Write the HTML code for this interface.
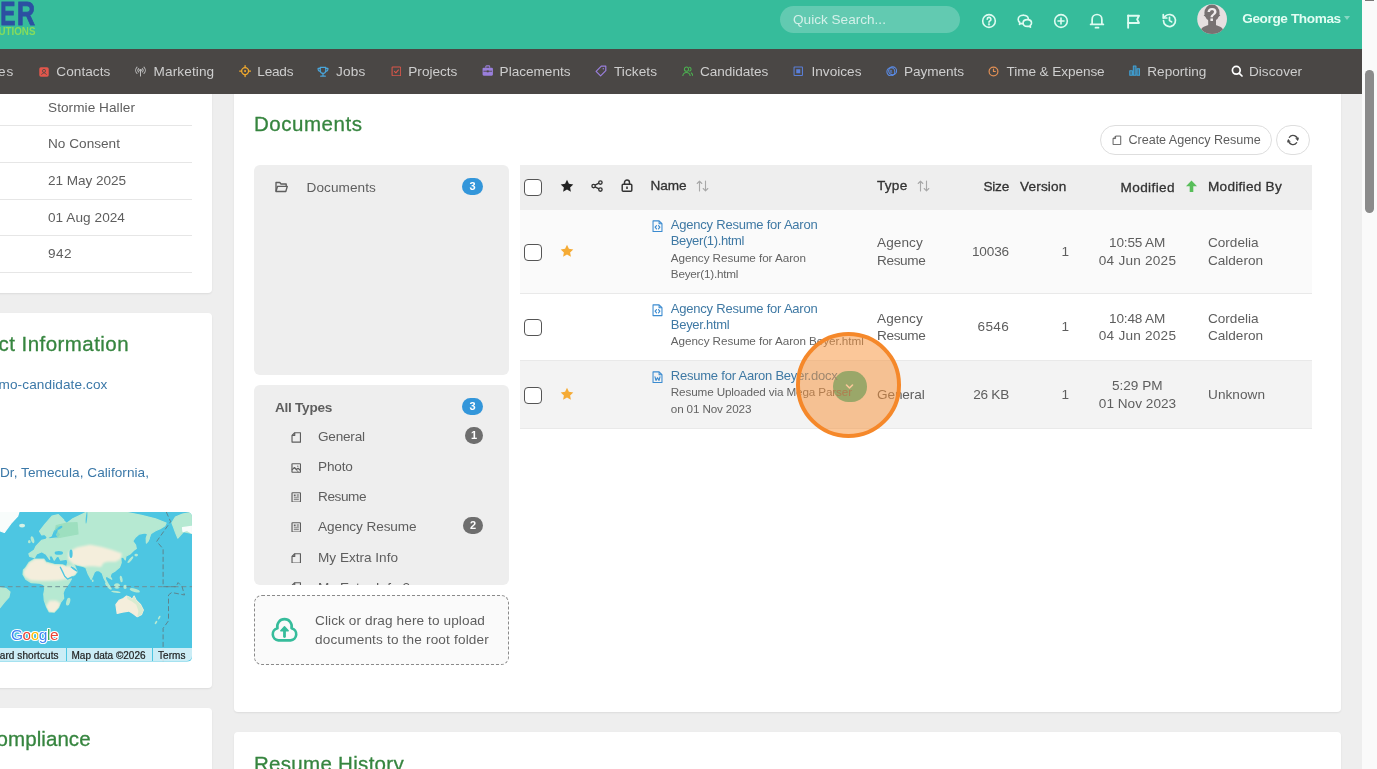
<!DOCTYPE html>
<html lang="en">
<head>
<meta charset="utf-8">
<title>Candidate Documents</title>
<style>
*{box-sizing:border-box;margin:0;padding:0}
html,body{width:1377px;height:769px;overflow:hidden;background:#eeeeee;font-family:"Liberation Sans",sans-serif;color:#555;}
.abs{position:absolute;white-space:nowrap}
#hdr{z-index:5;position:absolute;left:0;top:0;width:1362px;height:49px;background:#36bc9b}
#nav{position:absolute;left:0;top:49px;width:1362px;height:44.5px;background:#4a4745;z-index:5}
#nav .it{position:absolute;top:0;height:45px;line-height:45px;font-size:14px;color:#d6d6d6;white-space:nowrap}
#nav svg{position:absolute}
#sb{z-index:6;position:absolute;left:1362px;top:0;width:15px;height:769px;background:#fafafa}
#sb .th{position:absolute;left:3.200px;top:70px;width:8.800px;height:143px;border-radius:4.400px;background:#8b8b8b}
.card{position:absolute;background:#fff;border-radius:4px;box-shadow:0 1px 2px rgba(0,0,0,.08)}
.h1{position:absolute;color:#388e3c;font-size:20px;white-space:nowrap}
.lrow{position:absolute;left:0;width:192px;height:1px;background:#e6e6e6}
.ltxt{position:absolute;left:48px;font-size:14px;color:#555;white-space:nowrap}
.lnk{position:absolute;font-size:13.5px;color:#3b78a8;white-space:nowrap}
.panel{position:absolute;background:#eeeeee;border-radius:6px}
.badge{position:absolute;height:16px;border-radius:8px;color:#fff;font-size:11px;font-weight:bold;text-align:center;line-height:16px}
.t{position:absolute;white-space:nowrap;line-height:20px;height:20px}
.cb{position:absolute;width:17.600px;height:17px;border:1.5px solid #555;border-radius:4px;background:#fff}
</style>
</head>
<body>
<div id="root" style="position:absolute;left:0;top:0;width:1377px;height:769px;overflow:hidden;will-change:transform">
<!-- left cards -->
<div class="card" style="left:-10px;top:80px;width:222px;height:213px"></div>
<div class="lrow" style="top:125px"></div>
<div class="lrow" style="top:162px"></div>
<div class="lrow" style="top:198.500px"></div>
<div class="lrow" style="top:235px"></div>
<div class="lrow" style="top:271.500px"></div>
<span class="t" style="left:48px;top:97.8px;font-size:13.6px;color:#5e5e5e;letter-spacing:0.062px">Stormie Haller</span>
<span class="t" style="left:48px;top:134.3px;font-size:13.6px;color:#5e5e5e;letter-spacing:0.020px">No Consent</span>
<span class="t" style="left:48px;top:170.8px;font-size:13.6px;color:#5e5e5e;letter-spacing:-0.055px">21 May 2025</span>
<span class="t" style="left:48px;top:207.8px;font-size:13.6px;color:#5e5e5e;letter-spacing:0.058px">01 Aug 2024</span>
<span class="t" style="left:48px;top:244.3px;font-size:13.6px;color:#5e5e5e;letter-spacing:0.438px">942</span>

<div class="card" style="left:-10px;top:313px;width:222px;height:375px"></div>
<span class="t" style="left:-1.5px;top:333.6px;font-size:20.5px;color:#36853f;letter-spacing:0.450px;-webkit-text-stroke:.3px #36853f">ct Information</span>
<span class="t" style="left:-1.5px;top:375.3px;font-size:13.6px;color:#3b78a8;letter-spacing:0.106px">mo-candidate.cox</span>
<span class="t" style="left:0px;top:463.3px;font-size:13.6px;color:#3b78a8;letter-spacing:0.046px">Dr, Temecula, California,</span>

<!-- map -->
<svg class="abs" style="left:0;top:512px;border-radius:0 5px 5px 0" width="192" height="149.500" viewBox="0 0 192 149.500">
<rect width="192" height="149.500" fill="#4dc6e2"/>
<g stroke-linejoin="round" stroke-width="1.200">
<path d="M29.7 44.3L28.9 41.7L34.3 38.1L35.9 34.4L41.6 28.4L45.8 27.3L47.3 25.3L49.4 26.9L58.3 25.9L60.9 22.5L58.3 19.3L60.9 13.6L63.5 8.4L66.6 11.5L72.8 6.8L82.2 2.2L86.4 0.1L126.3 0.3L141.5 3.3L155.5 6.8L166.1 11.1L164.9 13.8L160.2 16.7L155.5 18.8L151.1 21.4L149.9 23.5L148.3 28.7L146.4 31.0L146.2 26.1L147.6 22.0L145.0 20.9L139.2 22.1L135.1 25.6L132.7 29.1L135.6 33.1L136.3 36.6L133.5 38.5L130.0 42.0L125.9 44.3L125.3 47.9L123.1 45.0L120.9 46.0L121.2 50.7L119.5 55.3L115.3 58.9L111.3 61.2L110.1 64.2L111.8 67.3L108.7 65.4L105.9 63.8L105.4 67.0L107.6 71.1L109.0 74.1L106.4 70.6L103.8 65.9L102.3 61.2L99.4 58.9L97.0 58.3L94.4 59.9L91.2 67.4L88.0 61.6L85.8 55.6L82.6 54.3L77.3 53.2L74.0 52.1L77.2 59.6L75.1 62.7L67.1 66.9L64.7 63.8L60.4 54.9L66.6 54.4L67.8 50.2L66.8 47.1L60.6 48.2L58.5 44.0L56.4 45.0L54.3 48.2L52.2 44.0L48.9 43.8L49.7 47.4L46.0 42.1L41.8 39.8L36.6 41.9L34.5 45.6ZM25.2 56.3L29.3 50.2L34.5 47.1L43.9 47.1L46.0 50.2L54.3 52.3L62.6 52.8L66.6 54.6L60.1 55.1L64.5 64.0L67.1 67.1L64.5 63.2L66.6 66.3L71.4 66.9L68.7 71.7L64.7 76.9L63.1 81.1L63.7 86.3L60.6 90.5L58.5 95.7L54.3 100.2L49.1 99.8L46.4 94.6L44.3 88.4L43.8 82.1L44.8 76.9L43.8 72.8L39.6 71.2L31.3 70.7L26.1 67.6L23.0 62.4L23.4 58.0ZM0.0 75.7L6.2 76.7L10.0 79.9L8.9 85.1L4.2 90.3L0.0 95.7ZM171.9 10.9L175.4 5.0L182.5 2.1L191.8 0.3L191.8 21.4L183.6 19.7L177.8 26.1L175.4 20.2L173.7 15.6ZM39.5 19.3L44.7 12.6L52.0 4.2L58.3 2.7L63.7 7.9L60.9 13.6L56.7 13.6L53.3 18.8L51.2 24.0L47.6 25.6L45.0 22.5L41.8 23.0Z" fill="#b6e9d2" stroke="#b6e9d2"/>
<path d="M56.2 13.6L66.6 11.0L77.0 10.5L78.0 21.9L58.3 25.6L55.2 20.4Z" fill="#98ddbb" stroke="#98ddbb" opacity=".8"/>
<filter id="mb" x="-5%" y="-5%" width="110%" height="110%"><feGaussianBlur stdDeviation=".8"/></filter><clipPath id="lc"><path d="M29.7 44.3L28.9 41.7L34.3 38.1L35.9 34.4L41.6 28.4L45.8 27.3L47.3 25.3L49.4 26.9L58.3 25.9L60.9 22.5L58.3 19.3L60.9 13.6L63.5 8.4L66.6 11.5L72.8 6.8L82.2 2.2L86.4 0.1L126.3 0.3L141.5 3.3L155.5 6.8L166.1 11.1L164.9 13.8L160.2 16.7L155.5 18.8L151.1 21.4L149.9 23.5L148.3 28.7L146.4 31.0L146.2 26.1L147.6 22.0L145.0 20.9L139.2 22.1L135.1 25.6L132.7 29.1L135.6 33.1L136.3 36.6L133.5 38.5L130.0 42.0L125.9 44.3L125.3 47.9L123.1 45.0L120.9 46.0L121.2 50.7L119.5 55.3L115.3 58.9L111.3 61.2L110.1 64.2L111.8 67.3L108.7 65.4L105.9 63.8L105.4 67.0L107.6 71.1L109.0 74.1L106.4 70.6L103.8 65.9L102.3 61.2L99.4 58.9L97.0 58.3L94.4 59.9L91.2 67.4L88.0 61.6L85.8 55.6L82.6 54.3L77.3 53.2L74.0 52.1L77.2 59.6L75.1 62.7L67.1 66.9L64.7 63.8L60.4 54.9L66.6 54.4L67.8 50.2L66.8 47.1L60.6 48.2L58.5 44.0L56.4 45.0L54.3 48.2L52.2 44.0L48.9 43.8L49.7 47.4L46.0 42.1L41.8 39.8L36.6 41.9L34.5 45.6ZM25.2 56.3L29.3 50.2L34.5 47.1L43.9 47.1L46.0 50.2L54.3 52.3L62.6 52.8L66.6 54.6L60.1 55.1L64.5 64.0L67.1 67.1L64.5 63.2L66.6 66.3L71.4 66.9L68.7 71.7L64.7 76.9L63.1 81.1L63.7 86.3L60.6 90.5L58.5 95.7L54.3 100.2L49.1 99.8L46.4 94.6L44.3 88.4L43.8 82.1L44.8 76.9L43.8 72.8L39.6 71.2L31.3 70.7L26.1 67.6L23.0 62.4L23.4 58.0Z"/></clipPath><g clip-path="url(#lc)"><path d="M26.0 56.8L29.7 50.9L34.9 47.7L43.7 47.7L45.8 50.9L54.3 52.8L62.4 53.4L66.6 55.0L66.6 60.1L68.7 65.8L58.3 67.9L43.7 68.4L31.2 67.9L25.0 64.2L23.7 60.1ZM60.8 55.2L66.6 54.8L71.8 54.8L77.2 59.8L75.1 62.7L67.2 66.7L64.7 63.6ZM69.1 40.6L77.3 35.8L90.1 33.3L100.9 35.4L111.6 38.4L121.2 41.8L120.2 46.6L115.9 49.1L107.3 49.1L103.0 50.4L100.9 54.3L90.1 53.4L82.6 54.3L74.0 52.1L68.7 47.0ZM46.4 94.6L49.9 89.2L56.2 89.2L59.8 91.8L58.5 95.7L54.3 100.2L49.1 99.8Z" fill="#f4eedc" stroke="#f4eedc" filter="url(#mb)"/></g><path d="M115.9 92.7L119.1 88.4L123.4 86.5L126.6 84.1L129.8 85.2L132.0 87.6L134.1 84.1L136.3 88.4L140.6 92.7L143.3 98.1L141.6 102.4L137.3 104.7L133.0 101.5L128.8 99.1L122.3 100.2L117.2 101.5Z" fill="#f4eedc" stroke="#f4eedc"/>
<path d="M126.6 84.1L129.8 85.2L132.0 87.6L134.1 84.1L136.3 88.4L140.6 92.7L143.3 98.1L141.6 102.4L137.3 104.7L138.4 99.1L136.3 92.7L132.0 89.5L127.7 87.3Z" fill="#cdeacb" opacity=".7"/>
<path d="M0.0 0.1L18.9 0.1L17.7 4.2L11.7 10.5L4.4 20.5L0.0 18.8ZM182.5 15.6L191.8 14.4L191.8 21.2L187.1 18.5L183.0 19.7Z" fill="#f8fcfb" stroke="#f8fcfb"/>
</g>
<ellipse cx="68.2" cy="89.7" rx="1.9" ry="4.0" fill="#b6e9d2" transform="rotate(15 68.2 89.7)"/><ellipse cx="32.5" cy="27.7" rx="1.6" ry="3.6" fill="#b6e9d2" transform="rotate(-15 32.5 27.7)"/><ellipse cx="29.3" cy="29.7" rx="1.3" ry="1.6" fill="#b6e9d2"/><ellipse cx="22.1" cy="13.6" rx="2.9" ry="1.9" fill="#d6f2e6"/><ellipse cx="130.4" cy="47.7" rx="1.2" ry="4.2" fill="#b6e9d2" transform="rotate(40 130.4 47.7)"/><ellipse cx="136.2" cy="43.1" rx="1.8" ry="1.4" fill="#b6e9d2"/><ellipse cx="121.2" cy="67.0" rx="1.3" ry="3.4" fill="#b6e9d2" transform="rotate(-10 121.2 67.0)"/><ellipse cx="108.4" cy="74.0" rx="1.5" ry="4.7" fill="#b6e9d2" transform="rotate(-40 108.4 74.0)"/><ellipse cx="117.0" cy="74.0" rx="3.0" ry="2.8" fill="#b6e9d2"/><ellipse cx="115.9" cy="79.8" rx="4.7" ry="0.9" fill="#b6e9d2" transform="rotate(8 115.9 79.8)"/><ellipse cx="134.8" cy="78.3" rx="5.2" ry="1.7" fill="#b6e9d2" transform="rotate(15 134.8 78.3)"/><ellipse cx="92.7" cy="68.7" rx="0.9" ry="1.3" fill="#b6e9d2"/><ellipse cx="159.2" cy="105.6" rx="0.9" ry="2.1" fill="#b6e9d2" transform="rotate(30 159.2 105.6)"/><ellipse cx="156.0" cy="110.5" rx="0.9" ry="1.9" fill="#b6e9d2" transform="rotate(35 156.0 110.5)"/><ellipse cx="125.1" cy="74.9" rx="1.7" ry="2.1" fill="#b6e9d2"/><ellipse cx="148.5" cy="26.1" rx="1.3" ry="4.6" fill="#b6e9d2" transform="rotate(20 148.5 26.1)"/>
<ellipse cx="58.8" cy="40.9" rx="4.2" ry="1.9" fill="#4dc6e2"/><ellipse cx="71.0" cy="41.7" rx="1.6" ry="4.2" fill="#4dc6e2"/><ellipse cx="55.7" cy="20.4" rx="1.2" ry="3.6" fill="#4dc6e2" transform="rotate(25 55.7 20.4)"/><ellipse cx="59.8" cy="15.7" rx="3.0" ry="1.2" fill="#4dc6e2" transform="rotate(-30 59.8 15.7)"/><ellipse cx="86.5" cy="5.8" rx="0.7" ry="6.0" fill="#4dc6e2" transform="rotate(5 86.5 5.8)"/><ellipse cx="74.1" cy="57.1" rx="3.2" ry="0.8" fill="#4dc6e2" transform="rotate(35 74.1 57.1)"/>
<path d="M60.1 54.7L62.4 59.4L64.7 64.2L67.6 67.1L72.8 64.6M70.8 54.7L73.4 56.3L77.5 59.6" stroke="#4dc6e2" stroke-width="1.300" fill="none" stroke-linejoin="round"/>
<path d="M0 74.700H192" stroke="#6f8f96" stroke-width="1" stroke-dasharray="4.700 3.200" fill="none"/>
<path d="M166.3 0.0L170.6 9.7L156.7 29.4L163.1 36.9L163.1 74.7L176.0 74.7L178.1 70.6L182.0 74.5L184.5 83.0L171.7 80.5L168.5 83.0L168.5 108.8L163.1 116.3L163.1 149.1" stroke="#5f7d85" stroke-width=".9" stroke-dasharray="5 2.500" fill="none"/>
</svg>
<div class="abs" style="left:0;top:648.300px;width:65.500px;height:13.200px;background:rgba(245,250,252,.75)"></div>
<div class="abs" style="left:66.500px;top:648.300px;width:85.500px;height:13.200px;background:rgba(245,250,252,.75)"></div>
<div class="abs" style="left:153px;top:648.300px;width:39px;height:13.200px;background:rgba(245,250,252,.75);border-radius:0 0 5px 0"></div>
<span class="t" style="left:-29px;top:645.8px;font-size:10px;color:#222;letter-spacing:0.079px;-webkit-text-stroke:.2px #222">Keyboard shortcuts</span>
<span class="t" style="left:71.5px;top:645.8px;font-size:10px;color:#222;letter-spacing:-0.007px;-webkit-text-stroke:.2px #222">Map data ©2026</span>
<span class="t" style="left:158px;top:645.8px;font-size:10px;color:#222;letter-spacing:0.073px;-webkit-text-stroke:.2px #222">Terms</span>
<svg class="abs" style="left:8px;top:622px" width="56" height="26" viewBox="0 0 56 26"><text x="3" y="18" font-family="Liberation Sans, sans-serif" font-size="15.500" letter-spacing="-.5" stroke="#fff" stroke-width="2.200" stroke-linejoin="round" paint-order="stroke" fill="#4285f4"><tspan fill="#4285f4">G</tspan><tspan fill="#ea4335">o</tspan><tspan fill="#fbbc05">o</tspan><tspan fill="#4285f4">g</tspan><tspan fill="#34a853">l</tspan><tspan fill="#ea4335">e</tspan></text></svg>

<div class="card" style="left:-10px;top:708px;width:222px;height:100px"></div>
<span class="t" style="left:-3.5px;top:729.1px;font-size:20.5px;color:#36853f;letter-spacing:0.083px;-webkit-text-stroke:.3px #36853f">ompliance</span>
<!-- main card -->
<div class="card" style="left:234px;top:80px;width:1107px;height:632px"></div>
<div class="card" style="left:234px;top:732px;width:1107px;height:100px"></div>
<span class="t" style="left:254px;top:113.6px;font-size:20.5px;color:#36853f;letter-spacing:0.535px;-webkit-text-stroke:.3px #36853f">Documents</span>
<span class="t" style="left:254px;top:753.5px;font-size:20.5px;color:#36853f;letter-spacing:0.299px;-webkit-text-stroke:.3px #36853f">Resume History</span>

<!-- buttons -->
<div class="abs" style="left:1100px;top:125px;width:171.500px;height:30px;border:1px solid #dedede;border-radius:15px;background:#fff"></div>
<svg class="abs" style="left:1112.300px;top:134.800px" width="9.800" height="10.700" viewBox="0 0 11 12" fill="none" stroke="#5e5e5e" stroke-width="1.100" stroke-linejoin="round"><path d="M4 1.200h5.800v9.600H1.200V4z"/><path d="M4 1.200V4H1.200"/></svg>
<span class="t" style="left:1128.5px;top:130.3px;font-size:12.6px;color:#5e5e5e;letter-spacing:-0.041px">Create Agency Resume</span>
<div class="abs" style="left:1276px;top:125px;width:34px;height:30px;border:1px solid #dedede;border-radius:15px;background:#fff"></div>
<svg class="abs" style="left:1287px;top:134.300px" width="12" height="12" viewBox="0 0 12 12" fill="none" stroke="#4a4a4a" stroke-width="1.250" stroke-linecap="round" stroke-linejoin="round"><path d="M10.600 6A4.600 4.600 0 0 0 2.300 3.300"/><path d="M1.400 6a4.600 4.600 0 0 0 8.300 2.700"/><path d="M8.900 4.700l1.900 1.600 1-2.200z" fill="#4a4a4a" stroke-width=".5"/><path d="M3.100 7.300L1.200 5.700l-1 2.200z" fill="#4a4a4a" stroke-width=".5"/></svg>

<!-- folder panel -->
<div class="panel" style="left:254px;top:165px;width:255px;height:209.500px"></div>
<svg class="abs" style="left:275px;top:181px" width="13" height="12" viewBox="0 0 13 12" fill="none" stroke="#5e5e5e" stroke-width="1.350" stroke-linejoin="round"><path d="M1 10.500V1.500h3.800l1.200 1.500h5.200v2"/><path d="M1 10.500l1.500-5.200h9.800l-1.500 5.200z"/></svg>
<span class="t" style="left:306.5px;top:177.8px;font-size:13.6px;color:#5e5e5e;letter-spacing:0.082px">Documents</span>
<div class="badge" style="left:462px;top:178px;width:21px;height:17px;line-height:17px;border-radius:8.500px;background:#3396da">3</div>

<!-- types panel -->
<div class="panel" style="left:254px;top:385px;width:255px;height:200px;overflow:hidden"></div>
<span class="t" style="left:275px;top:398.3px;font-size:13.6px;color:#5e5e5e;font-weight:bold;letter-spacing:-0.271px">All Types</span>
<div class="badge" style="left:462px;top:398px;width:21px;height:17px;line-height:17px;border-radius:8.500px;background:#3396da">3</div>
<svg class="abs" style="left:290.700px;top:432.2px" width="10.500" height="10.8" viewBox="0 0 11 12" fill="none" stroke="#5e5e5e" stroke-width="1.300" stroke-linejoin="round"><path d="M3.800 .8h6.400v10.400H.8V3.800z"/><path d="M3.800 .8v3H.8"/></svg>
<span class="t" style="left:318px;top:427.4px;font-size:13.6px;color:#5e5e5e;letter-spacing:-0.225px">General</span>
<div class="badge" style="left:465px;top:427px;width:18px;height:16.500px;line-height:16.500px;border-radius:8.500px;background:#6e6e6e">1</div>
<svg class="abs" style="left:290.700px;top:462.7px" width="10.500" height="10" viewBox="0 0 11 11" fill="none" stroke="#5e5e5e" stroke-width="1.300" stroke-linejoin="round"><rect x=".8" y=".8" width="9.400" height="9.400" rx=".6"/><path d="M.8 7.500l2.700-2.500 2.300 2.200 1.700-1.400 2.700 2.500"/><circle cx="7.200" cy="3.500" r=".7" fill="#5e5e5e" stroke="none"/><path d="M3.500 5l4.500 5.200" stroke-width=".9"/></svg>
<span class="t" style="left:318px;top:456.7px;font-size:13.6px;color:#5e5e5e;letter-spacing:-0.186px">Photo</span>
<svg class="abs" style="left:290.700px;top:491.7px" width="10.500" height="10.8" viewBox="0 0 11 12" fill="none" stroke="#5e5e5e" stroke-width="1.300" stroke-linejoin="round"><rect x=".8" y=".8" width="9.400" height="10.400" rx=".6"/><rect x="2.800" y="2.800" width="2" height="2" fill="#5e5e5e" stroke="none"/><path d="M6 3.200h2.400M6 4.600h2.400M2.800 6.500h5.600M2.800 8.500h5.600" stroke-width=".9"/></svg>
<span class="t" style="left:318px;top:487.4px;font-size:13.6px;color:#5e5e5e;letter-spacing:-0.421px">Resume</span>
<svg class="abs" style="left:290.700px;top:521.7px" width="10.500" height="10.8" viewBox="0 0 11 12" fill="none" stroke="#5e5e5e" stroke-width="1.300" stroke-linejoin="round"><rect x=".8" y=".8" width="9.400" height="10.400" rx=".6"/><rect x="2.800" y="2.800" width="2" height="2" fill="#5e5e5e" stroke="none"/><path d="M6 3.200h2.400M6 4.600h2.400M2.800 6.500h5.600M2.800 8.500h5.600" stroke-width=".9"/></svg>
<span class="t" style="left:318px;top:517.3px;font-size:13.6px;color:#5e5e5e;letter-spacing:-0.096px">Agency Resume</span>
<div class="badge" style="left:463px;top:517px;width:20px;height:16.500px;line-height:16.500px;border-radius:8.500px;background:#6e6e6e">2</div>
<svg class="abs" style="left:290.700px;top:552.7px" width="10.500" height="10.8" viewBox="0 0 11 12" fill="none" stroke="#5e5e5e" stroke-width="1.300" stroke-linejoin="round"><path d="M3.800 .8h6.400v10.400H.8V3.800z"/><path d="M3.800 .8v3H.8"/></svg>
<span class="t" style="left:318px;top:548.3px;font-size:13.6px;color:#5e5e5e;letter-spacing:-0.006px">My Extra Info</span>
<div class="abs" style="left:254px;top:385px;width:255px;height:200px;overflow:hidden;border-radius:6px">
<svg class="abs" style="left:36.700px;top:197.200px" width="10.500" height="10.800" viewBox="0 0 11 12" fill="none" stroke="#5e5e5e" stroke-width="1.300" stroke-linejoin="round"><path d="M3.800 .8h6.400v10.400H.8V3.800z"/><path d="M3.800 .8v3H.8"/></svg>
<span class="t" style="left:64px;top:193px;font-size:13.6px;color:#5e5e5e;letter-spacing:0.039px">My Extra Info 2</span>
</div>

<!-- upload box -->
<div class="abs" style="left:254px;top:595px;width:255px;height:69.500px;border:1px dashed #8a8a8a;border-radius:8px;background:#fafafa"></div>
<svg class="abs" style="left:270px;top:615.500px" width="29" height="29" viewBox="0 0 29 29" fill="none" stroke="#36bc9b" stroke-width="2.600" stroke-linecap="round" stroke-linejoin="round"><path d="M8.400 24.400a6.200 6.200 0 0 1-.9-12.200a7.240 7.240 0 1 1 14 0a6.200 6.200 0 0 1-.9 12.200z"/><path d="M14.500 20.500v-6" stroke-width="2.800"/><path d="M10.800 14.800l3.700-4 3.700 4z" fill="#36bc9b" stroke-width="1.400"/></svg>
<span class="t" style="left:315px;top:610.5px;font-size:13.6px;color:#5e5e5e;letter-spacing:0.107px">Click or drag here to upload</span>
<span class="t" style="left:315px;top:629.8px;font-size:13.6px;color:#5e5e5e;letter-spacing:0.169px">documents to the root folder</span>
<!-- table -->
<div class="abs" style="left:520px;top:165px;width:792px;height:44.700px;background:#eeeeee"></div>
<div class="abs" style="left:520px;top:209.700px;width:792px;height:84px;background:#fafafa;border-bottom:1px solid #e9e9e9"></div>
<div class="abs" style="left:520px;top:293.700px;width:792px;height:67px;background:#fff;border-bottom:1px solid #e9e9e9"></div>
<div class="abs" style="left:520px;top:360.700px;width:792px;height:68px;background:#f3f3f3;border-bottom:1px solid #e9e9e9"></div>

<!-- header row -->
<div class="cb" style="left:524.200px;top:179px"></div>
<svg class="abs" style="left:560px;top:179px" width="14" height="14" viewBox="0 0 14 14"><path d="M7 .8l1.900 4 4.400.6-3.200 3 .8 4.300L7 10.600l-3.900 2.100.8-4.300-3.200-3 4.400-.6z" fill="#222"/></svg>
<svg class="abs" style="left:591px;top:179.500px" width="12" height="12" viewBox="0 0 12 12" fill="none" stroke="#333" stroke-width="1.350"><circle cx="2.600" cy="6" r="1.700"/><circle cx="9.400" cy="2.500" r="1.700"/><circle cx="9.400" cy="9.500" r="1.700"/><path d="M4.100 5.200l3.800-2M4.100 6.800l3.800 2"/></svg>
<svg class="abs" style="left:621px;top:178.500px" width="12" height="13" viewBox="0 0 12 13" fill="none" stroke="#333" stroke-width="1.450" stroke-linejoin="round"><rect x="1.200" y="5.200" width="9.600" height="7" rx="1"/><path d="M3.500 5.200V3.500a2.500 2.500 0 0 1 5 0v1.700"/><path d="M6 7.500v2.500" stroke-width="1.600"/></svg>
<span class="t" style="left:650.5px;top:176.3px;font-size:13.6px;color:#333;letter-spacing:-0.066px;-webkit-text-stroke:.3px #333">Name</span>
<svg class="abs" style="left:696px;top:180px" width="13" height="12" viewBox="0 0 13 12" fill="none" stroke="#a8a8a8" stroke-width="1.100" stroke-linecap="round" stroke-linejoin="round"><path d="M3.500 11V1.200M1.200 3.500l2.300-2.300 2.300 2.300M9.500 1v9.800M7.200 8.500l2.300 2.300 2.300-2.300"/></svg>
<span class="t" style="left:877px;top:176.3px;font-size:13.6px;color:#333;letter-spacing:0.254px;-webkit-text-stroke:.3px #333">Type</span>
<svg class="abs" style="left:916.500px;top:180px" width="13" height="12" viewBox="0 0 13 12" fill="none" stroke="#a8a8a8" stroke-width="1.100" stroke-linecap="round" stroke-linejoin="round"><path d="M3.500 11V1.200M1.200 3.500l2.300-2.300 2.300 2.300M9.500 1v9.800M7.200 8.500l2.300 2.300 2.300-2.300"/></svg>
<span class="t" style="left:983.4px;top:176.8px;font-size:13.6px;color:#333;letter-spacing:-0.213px;-webkit-text-stroke:.3px #333">Size</span>
<span class="t" style="left:1020px;top:176.8px;font-size:13.6px;color:#333;letter-spacing:0.165px;-webkit-text-stroke:.3px #333">Version</span>
<span class="t" style="left:1120.5px;top:177.8px;font-size:13.6px;color:#333;letter-spacing:0.389px;-webkit-text-stroke:.3px #333">Modified</span>
<svg class="abs" style="left:1184.500px;top:180px" width="13" height="13" viewBox="0 0 13 13"><path d="M6.500 .5l5.500 5.800H8.300V12H4.700V6.300H1z" fill="#58be5a"/></svg>
<span class="t" style="left:1208px;top:176.8px;font-size:13.6px;color:#333;letter-spacing:0.270px;-webkit-text-stroke:.3px #333">Modified By</span>

<!-- row 1 -->
<div class="cb" style="left:524.200px;top:243.500px"></div>
<svg class="abs" style="left:560px;top:244px" width="14" height="14" viewBox="0 0 14 14"><path d="M7 .8l1.900 4 4.400.6-3.200 3 .8 4.300L7 10.600l-3.900 2.100.8-4.300-3.200-3 4.400-.6z" fill="#f5ab35"/></svg>
<svg class="abs" style="left:651.700px;top:219.800px" width="11" height="12.500" viewBox="0 0 12 14" fill="none" stroke="#3b8bd0" stroke-width="1.200" stroke-linejoin="round"><path d="M1 1h6.800L11 4.200V13H1z"/><path d="M7.800 1v3.200H11"/><path d="M4.900 6.300L3.300 8.100l1.600 1.800M7.100 6.300l1.600 1.800-1.600 1.800" stroke-width="1.300" stroke-linecap="round"/></svg>
<span class="t" style="left:670.8px;top:214.9px;font-size:13px;color:#3f79a4;letter-spacing:-0.220px">Agency Resume for Aaron</span>
<span class="t" style="left:670.8px;top:230.9px;font-size:13px;color:#3f79a4;letter-spacing:-0.372px">Beyer(1).html</span>
<span class="t" style="left:670.8px;top:247.7px;font-size:11.7px;color:#646464;letter-spacing:-0.058px">Agency Resume for Aaron</span>
<span class="t" style="left:670.8px;top:264.1px;font-size:11.7px;color:#646464;letter-spacing:-0.212px">Beyer(1).html</span>
<span class="t" style="left:877px;top:233.2px;font-size:13.6px;color:#5e5e5e;letter-spacing:0.076px">Agency</span>
<span class="t" style="left:877px;top:250.9px;font-size:13.6px;color:#5e5e5e;letter-spacing:-0.354px">Resume</span>
<span class="t" style="left:971.9px;top:241.6px;font-size:13.6px;color:#5e5e5e;letter-spacing:-0.142px">10036</span>
<span class="t" style="left:1061.5px;top:241.6px;font-size:13.6px;color:#5e5e5e;letter-spacing:-2.562px">1</span>
<span class="t" style="left:1109px;top:233.2px;font-size:13.6px;color:#5e5e5e;letter-spacing:-0.155px">10:55 AM</span>
<span class="t" style="left:1098.8px;top:250.9px;font-size:13.6px;color:#5e5e5e;letter-spacing:0.232px">04 Jun 2025</span>
<span class="t" style="left:1208px;top:233.2px;font-size:13.6px;color:#5e5e5e;letter-spacing:-0.016px">Cordelia</span>
<span class="t" style="left:1208px;top:250.9px;font-size:13.6px;color:#5e5e5e;letter-spacing:-0.021px">Calderon</span>

<!-- row 2 -->
<div class="cb" style="left:524.200px;top:318.500px"></div>
<svg class="abs" style="left:651.700px;top:304.300px" width="11" height="12.500" viewBox="0 0 12 14" fill="none" stroke="#3b8bd0" stroke-width="1.200" stroke-linejoin="round"><path d="M1 1h6.800L11 4.200V13H1z"/><path d="M7.800 1v3.200H11"/><path d="M4.900 6.300L3.300 8.100l1.600 1.800M7.100 6.300l1.600 1.800-1.600 1.800" stroke-width="1.300" stroke-linecap="round"/></svg>
<span class="t" style="left:670.8px;top:299.3px;font-size:13px;color:#3f79a4;letter-spacing:-0.220px">Agency Resume for Aaron</span>
<span class="t" style="left:670.8px;top:314.6px;font-size:13px;color:#3f79a4;letter-spacing:-0.282px">Beyer.html</span>
<span class="t" style="left:670.8px;top:330.8px;font-size:11.7px;color:#646464;letter-spacing:-0.059px">Agency Resume for Aaron Beyer.html</span>
<span class="t" style="left:877px;top:308.8px;font-size:13.6px;color:#5e5e5e;letter-spacing:0.076px">Agency</span>
<span class="t" style="left:877px;top:326.1px;font-size:13.6px;color:#5e5e5e;letter-spacing:-0.354px">Resume</span>
<span class="t" style="left:977.6px;top:317.3px;font-size:13.6px;color:#5e5e5e;letter-spacing:0.287px">6546</span>
<span class="t" style="left:1061.5px;top:317.3px;font-size:13.6px;color:#5e5e5e;letter-spacing:-2.562px">1</span>
<span class="t" style="left:1109px;top:308.8px;font-size:13.6px;color:#5e5e5e;letter-spacing:-0.155px">10:48 AM</span>
<span class="t" style="left:1098.8px;top:326.1px;font-size:13.6px;color:#5e5e5e;letter-spacing:0.232px">04 Jun 2025</span>
<span class="t" style="left:1208px;top:308.8px;font-size:13.6px;color:#5e5e5e;letter-spacing:-0.016px">Cordelia</span>
<span class="t" style="left:1208px;top:326.1px;font-size:13.6px;color:#5e5e5e;letter-spacing:-0.021px">Calderon</span>

<!-- row 3 -->
<div class="abs" style="left:833px;top:371.300px;width:33.500px;height:30.500px;border-radius:15.250px;background:#36bc9b"></div>
<div class="cb" style="left:524.200px;top:386.500px"></div>
<svg class="abs" style="left:560px;top:387px" width="14" height="14" viewBox="0 0 14 14"><path d="M7 .8l1.900 4 4.400.6-3.200 3 .8 4.300L7 10.600l-3.900 2.100.8-4.300-3.200-3 4.400-.6z" fill="#f5ab35"/></svg>
<svg class="abs" style="left:651.700px;top:370.900px" width="11" height="12.500" viewBox="0 0 12 14" fill="none" stroke="#3b8bd0" stroke-width="1.200" stroke-linejoin="round"><path d="M1 1h6.800L11 4.200V13H1z"/><path d="M7.800 1v3.200H11"/><path d="M3.200 6.500l1.100 4 1.700-3L7.700 10.500l1.100-4" stroke-width="1.300" stroke-linecap="round"/></svg>
<span class="t" style="left:670.8px;top:366px;font-size:13px;color:#3f79a4;letter-spacing:-0.222px">Resume for Aaron Beyer.docx</span>
<span class="t" style="left:670.8px;top:381.6px;font-size:11.7px;color:#646464;letter-spacing:-0.128px">Resume Uploaded via Mega Parser</span>
<span class="t" style="left:670.8px;top:398.8px;font-size:11.7px;color:#646464;letter-spacing:-0.145px">on 01 Nov 2023</span>
<span class="t" style="left:877px;top:385.4px;font-size:13.6px;color:#5e5e5e;letter-spacing:-0.111px">General</span>
<span class="t" style="left:973.2px;top:385.4px;font-size:13.6px;color:#5e5e5e;letter-spacing:-0.246px">26 KB</span>
<span class="t" style="left:1061.5px;top:385.4px;font-size:13.6px;color:#5e5e5e;letter-spacing:-2.562px">1</span>
<span class="t" style="left:1112px;top:376.1px;font-size:13.6px;color:#5e5e5e;letter-spacing:-0.018px">5:29 PM</span>
<span class="t" style="left:1098.8px;top:394.2px;font-size:13.6px;color:#5e5e5e;letter-spacing:0.028px">01 Nov 2023</span>
<span class="t" style="left:1208px;top:385.4px;font-size:13.6px;color:#5e5e5e;letter-spacing:0.061px">Unknown</span>

<!-- dropdown button + click highlight -->
<svg class="abs" style="left:844.300px;top:382px" width="11" height="9" viewBox="0 0 11 9" fill="none" stroke="#fff" stroke-width="1.600" stroke-linecap="round" stroke-linejoin="round"><path d="M2.500 3l3 3 3-3"/></svg>
<div class="abs" style="left:795.800px;top:332.300px;width:105.600px;height:105.600px;border-radius:53px;background:rgba(247,148,60,.52);border:4.500px solid #f5882a"></div>
<div id="hdr">
<svg class="abs" style="left:0;top:0" width="60" height="49" viewBox="0 0 60 49"><g font-family="Liberation Sans, sans-serif" font-weight="bold"><text transform="translate(-18.500,24.900) scale(.69,1)" font-size="33" fill="#2c50a2" stroke="#2c50a2" stroke-width=".9">S</text><text transform="translate(.140,24.900) scale(.69,1)" font-size="33" fill="#2c50a2" stroke="#2c50a2" stroke-width=".9">E</text><text transform="translate(17.100,24.900) scale(.755,1)" font-size="33" fill="#2c50a2" stroke="#2c50a2" stroke-width=".9">R</text><text x="35.400" y="35.100" text-anchor="end" font-size="11.300" fill="#86dc5c" textLength="57" lengthAdjust="spacingAndGlyphs">SOLUTIONS</text></g></svg>
<div class="abs" style="left:780px;top:6px;width:180px;height:27px;border-radius:14px;background:rgba(255,255,255,.22)"></div>
<span class="t" style="left:793px;top:10.3px;font-size:13.6px;color:rgba(255,255,255,.72)">Quick Search...</span>
<svg class="abs" style="left:981px;top:12.700px" width="16" height="16" viewBox="0 0 24 24" fill="none" stroke="#dffbf1" stroke-width="2.4" stroke-linecap="round" stroke-linejoin="round"><circle cx="12" cy="12" r="9.5"/><path d="M9.3 9.3a2.8 2.8 0 1 1 3.9 2.6c-.8.4-1.2.9-1.2 1.8"/><circle cx="12" cy="17" r=".6" fill="#dffbf1"/></svg>
<svg class="abs" style="left:1016px;top:12px" width="17.500" height="17.500" viewBox="0 0 24 24" fill="none" stroke="#dffbf1" stroke-width="2.2" stroke-linecap="round" stroke-linejoin="round"><path d="M10 4.5c-4 0-7 2.500-7 5.700 0 1.700.9 3.200 2.300 4.200L4.800 17l3-1.400c.7.200 1.400.300 2.200.300"/><path d="M10 4.500c3.600 0 6.500 2 7 4.800"/><path d="M15.500 10.500c3.300 0 5.800 2 5.800 4.600 0 1.400-.7 2.600-1.900 3.400l.4 2.200-2.500-1.200c-.6.100-1.200.2-1.800.2-3.300 0-5.800-2-5.800-4.600s2.500-4.600 5.800-4.600z"/></svg>
<svg class="abs" style="left:1053px;top:12.700px" width="16" height="16" viewBox="0 0 24 24" fill="none" stroke="#dffbf1" stroke-width="2.4" stroke-linecap="round" stroke-linejoin="round"><circle cx="12" cy="12" r="9.500"/><path d="M12 7.500v9M7.500 12h9"/></svg>
<svg class="abs" style="left:1088px;top:11px" width="18" height="19" viewBox="0 0 24 25" fill="none" stroke="#dffbf1" stroke-width="2.300" stroke-linecap="round" stroke-linejoin="round"><path d="M5.500 17.500V11a6.500 6.500 0 0 1 13 0v6.500"/><path d="M3.500 17.800h17"/><path d="M10 22h4"/></svg>
<svg class="abs" style="left:1124px;top:12px" width="18" height="18" viewBox="0 0 24 24" fill="none" stroke="#dffbf1" stroke-width="2.500" stroke-linecap="round" stroke-linejoin="round"><path d="M5.500 21V4.500"/><path d="M5.500 5h14.500l-2.500 4.800 2.500 4.800H5.500"/></svg>
<svg class="abs" style="left:1160.500px;top:12.300px" width="17" height="17" viewBox="0 0 24 24" fill="none" stroke="#dffbf1" stroke-width="2.400" stroke-linecap="round" stroke-linejoin="round"><path d="M3.500 12a8.500 8.500 0 1 0 2.600-6.100L3.500 8.500"/><path d="M3.200 3.500v5h5" /><path d="M12 7.500V12l3 2"/></svg>
<svg class="abs" style="left:1197px;top:3.600px" width="30.200" height="30.200" viewBox="0 0 30.200 30.200"><defs><clipPath id="avc"><circle cx="15.100" cy="15.100" r="14.900"/></clipPath></defs><circle cx="15.100" cy="15.100" r="14.900" fill="#e6dfe0"/><g clip-path="url(#avc)" fill="#787172"><ellipse cx="15" cy="9" rx="7.600" ry="8.400"/><ellipse cx="15" cy="11.500" rx="8.300" ry="1.600"/><rect x="11.200" y="15" width="7.800" height="7"/><ellipse cx="15" cy="27.500" rx="11.600" ry="6.700"/></g><text x="15" y="17.200" text-anchor="middle" font-family="Liberation Sans, sans-serif" font-weight="bold" font-size="17.500" fill="#f1eced">?</text></svg>
<span class="t" style="left:1242.2px;top:8.7px;font-size:13.6px;color:#e2fdf3;font-weight:bold;letter-spacing:-0.377px">George Thomas</span>
<div class="abs" style="left:1344.400px;top:15.800px;width:0;height:0;border-left:3.600px solid transparent;border-right:3.600px solid transparent;border-top:4.200px solid rgba(255,255,255,.4)"></div>
</div>
<div id="nav">
<span class="t" style="left:-2px;top:12.8px;font-size:13.6px;color:#cecece;letter-spacing:0.820px">es</span>
<svg style="left:39.200px;top:17.500px" width="10" height="10" viewBox="0 0 11 11"><rect x=".3" y=".3" width="10.400" height="10.400" rx="1.800" fill="#e2574c"/><circle cx="5.500" cy="4.300" r="1.700" fill="none" stroke="#4a4745" stroke-width=".9"/><path d="M2.800 8.600c.4-1.400 1.400-2 2.700-2s2.300.6 2.700 2" fill="none" stroke="#4a4745" stroke-width=".9"/></svg>
<span class="t" style="left:56.3px;top:12.8px;font-size:13.6px;color:#cecece;letter-spacing:0.055px">Contacts</span>
<svg style="left:135.200px;top:17px" width="11" height="11" viewBox="0 0 12 12" fill="none" stroke="#bdbdbd" stroke-width="1.100" stroke-linecap="round"><path d="M6 5.500V11"/><circle cx="6" cy="4.600" r=".9" fill="#bdbdbd"/><path d="M4 2.800a2.700 2.700 0 0 0 0 3.800M8 2.800a2.700 2.700 0 0 1 0 3.800M2.200 1.200a5 5 0 0 0 0 7M9.800 1.200a5 5 0 0 1 0 7"/></svg>
<span class="t" style="left:153.6px;top:12.8px;font-size:13.6px;color:#cecece;letter-spacing:0.113px">Marketing</span>
<svg style="left:238.500px;top:16.400px" width="12.200" height="12.200" viewBox="0 0 13 13" fill="none" stroke="#f0a92e" stroke-width="1.400" stroke-linecap="round"><circle cx="6.500" cy="6.500" r="3.700"/><circle cx="6.500" cy="6.500" r="1.100" fill="#f0a92e" stroke="none"/><path d="M6.500 .7v2M6.500 10.300v2M.7 6.500h2M10.300 6.500h2"/></svg>
<span class="t" style="left:257.3px;top:12.8px;font-size:13.6px;color:#cecece;letter-spacing:-0.209px">Leads</span>
<svg style="left:317.300px;top:16.800px" width="12" height="12" viewBox="0 0 13 13" fill="none" stroke="#4aa6dc" stroke-width="1.300" stroke-linecap="round" stroke-linejoin="round"><path d="M3.500 1.500h6v3.500a3 3 0 0 1-6 0z"/><path d="M3.500 2.500H1.200v1a2.200 2.200 0 0 0 2.400 2.200M9.500 2.500h2.300v1a2.200 2.200 0 0 1-2.400 2.200M6.500 8v2.500M4 11h5"/></svg>
<span class="t" style="left:335.9px;top:12.8px;font-size:13.6px;color:#cecece;letter-spacing:0.245px">Jobs</span>
<svg style="left:390.700px;top:16.700px" width="10.800" height="10.800" viewBox="0 0 12 12" fill="none" stroke="#d9564a" stroke-width="1.200" stroke-linecap="round" stroke-linejoin="round"><rect x="1.200" y="1.200" width="9.600" height="9.600" rx=".8"/><path d="M3.800 6l1.600 1.700 2.900-3.300"/></svg>
<span class="t" style="left:408.3px;top:12.8px;font-size:13.6px;color:#cecece">Projects</span>
<svg style="left:482px;top:16px" width="11.500" height="11.500" viewBox="0 0 12 12"><path d="M4 2.800V1.600c0-.4.300-.7.700-.7h2.600c.4 0 .7.300.7.700v1.200" fill="none" stroke="#9a7fdc" stroke-width="1.100"/><rect x=".6" y="2.800" width="10.800" height="8.300" rx="1.200" fill="#9a7fdc"/><path d="M1.500 6.500h9" stroke="#4a4745" stroke-width=".9"/><rect x="5" y="5.700" width="2" height="1.900" fill="#4a4745"/></svg>
<span class="t" style="left:499.6px;top:12.8px;font-size:13.6px;color:#cecece;letter-spacing:-0.013px">Placements</span>
<svg style="left:595px;top:16px" width="12" height="12" viewBox="0 0 12 12" fill="none" stroke="#9a7fdc" stroke-width="1.200" stroke-linejoin="round"><path d="M6.300 1.200h4.500v4.500L5.600 10.900 1.100 6.400z"/><circle cx="8.300" cy="3.700" r=".7" fill="#9a7fdc" stroke="none"/></svg>
<span class="t" style="left:614px;top:12.8px;font-size:13.6px;color:#cecece;letter-spacing:0.065px">Tickets</span>
<svg style="left:681.700px;top:16.500px" width="11.700" height="10.800" viewBox="0 0 13 12" fill="none" stroke="#4caf50" stroke-width="1.200" stroke-linecap="round" stroke-linejoin="round"><circle cx="5" cy="3.500" r="2.300"/><path d="M.9 11c.3-2.400 1.900-3.700 4.100-3.700s3.800 1.300 4.100 3.700M8.300 1.300a2.300 2.300 0 0 1 .3 4.400M10.300 7.700c1 .6 1.600 1.700 1.800 3.300"/></svg>
<span class="t" style="left:699.9px;top:12.8px;font-size:13.6px;color:#cecece;letter-spacing:-0.038px">Candidates</span>
<svg style="left:793.400px;top:16.800px" width="10.500" height="10.500" viewBox="0 0 12 12"><rect x="1.200" y="1.200" width="9.600" height="9.600" rx=".6" fill="none" stroke="#5a7fd8" stroke-width="1.200"/><rect x="3.700" y="3.700" width="4.600" height="4.600" fill="#5a7fd8"/></svg>
<span class="t" style="left:811.5px;top:12.8px;font-size:13.6px;color:#cecece;letter-spacing:0.016px">Invoices</span>
<svg style="left:885.800px;top:16.600px" width="11.500" height="10.600" viewBox="0 0 13 12" fill="none" stroke="#5a8be6" stroke-width="1.200" stroke-linecap="round"><circle cx="7.500" cy="5.500" r="4.500"/><circle cx="5.500" cy="6.500" r="4.500"/><path d="M6.600 5.200c-.5-.6-2-.5-2 .3 0 1 2.100.5 2.100 1.600 0 .8-1.500 1-2.200.3" stroke-width=".9"/></svg>
<span class="t" style="left:904.1px;top:12.8px;font-size:13.6px;color:#cecece;letter-spacing:-0.057px">Payments</span>
<svg style="left:988.400px;top:16.500px" width="11" height="11" viewBox="0 0 12 12" fill="none" stroke="#e39055" stroke-width="1.300" stroke-linecap="round" stroke-linejoin="round"><circle cx="6" cy="6" r="4.800"/><path d="M6 3.500V6h2"/></svg>
<span class="t" style="left:1006.5px;top:12.8px;font-size:13.6px;color:#cecece;letter-spacing:-0.081px">Time &amp; Expense</span>
<svg style="left:1129.200px;top:16.300px" width="11.300" height="11.300" viewBox="0 0 12 12" fill="rgba(63,162,216,.45)" stroke="#3fa2d8" stroke-width="1.100" stroke-linejoin="round"><rect x=".8" y="6" width="2.800" height="5"/><rect x="4.600" y="1" width="2.800" height="10"/><rect x="8.400" y="4" width="2.800" height="7"/></svg>
<span class="t" style="left:1147.3px;top:12.8px;font-size:13.6px;color:#cecece;letter-spacing:0.005px">Reporting</span>
<svg style="left:1231px;top:16px" width="12" height="12" viewBox="0 0 12 12" fill="none" stroke="#ffffff" stroke-width="1.700" stroke-linecap="round"><circle cx="5.300" cy="5.300" r="3.900"/><path d="M8.300 8.300l2.700 2.700"/></svg>
<span class="t" style="left:1248.9px;top:12.8px;font-size:13.6px;color:#cecece;letter-spacing:0.053px">Discover</span>
</div>
<div id="sb"><div style="position:absolute;left:3px;top:0;width:9px;height:1px;background:#777"></div><div class="th"></div></div>
</div>
</body>
</html>
